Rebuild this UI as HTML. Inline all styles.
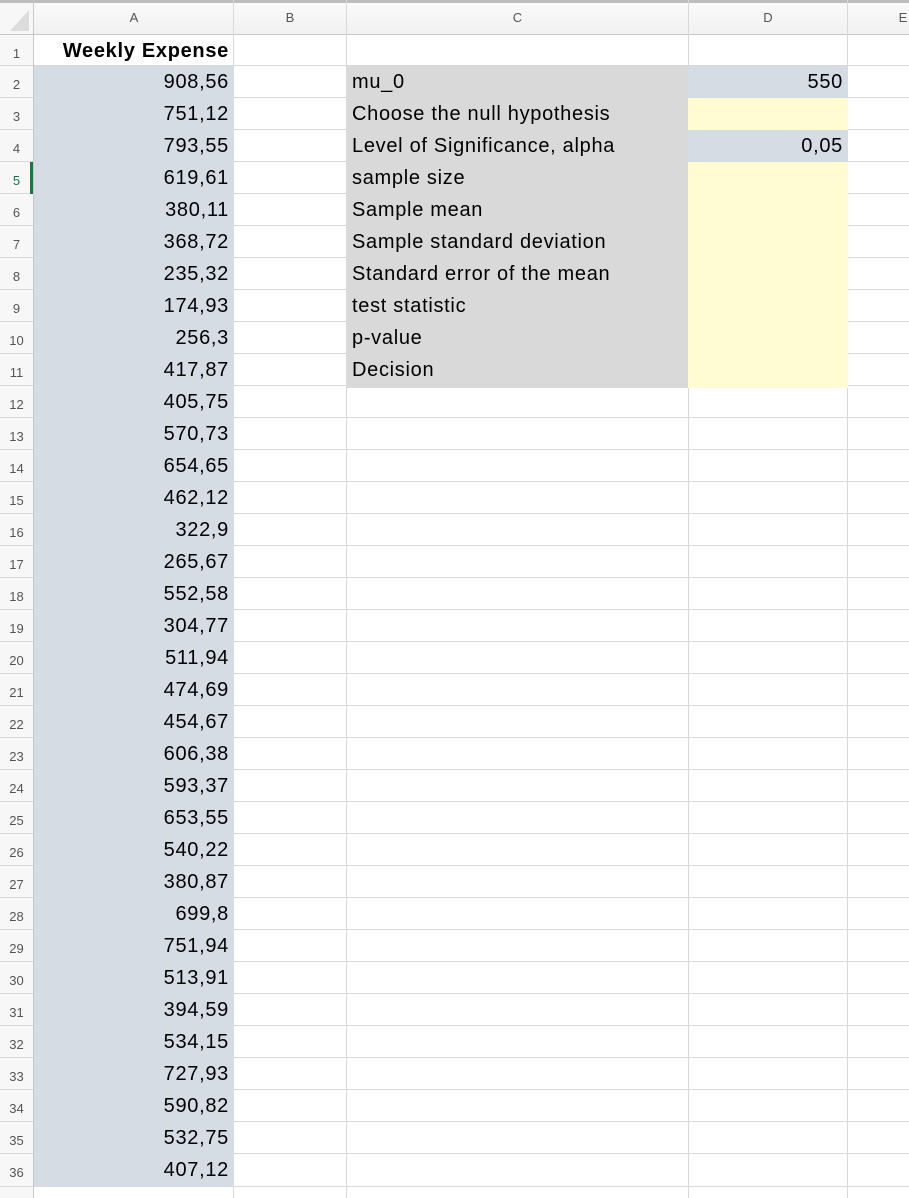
<!DOCTYPE html>
<html><head><meta charset="utf-8"><style>
*{margin:0;padding:0;box-sizing:border-box}
body{width:909px;height:1198px;position:relative;overflow:hidden;background:#fff;font-family:"Liberation Sans",Calibri,sans-serif;color:#000}
.a{position:absolute}
.h{position:absolute;left:0;width:909px;height:1px;background:#d8d8d8}
.v{position:absolute;top:0;width:1px;height:1198px;background:#d8d8d8}
.t{position:absolute;font-size:20px;line-height:31px;height:31px;white-space:nowrap;padding-top:1px;letter-spacing:0.7px}
.r{text-align:right}
.n{position:absolute;left:0;width:33px;text-align:center;font-size:13px;color:#555;line-height:31px;padding-top:3px}
.c{position:absolute;top:0;height:34px;line-height:36px;font-size:13px;color:#555;text-align:center}
</style></head><body>
<div class="a" style="left:0;top:0;width:909px;height:34px;background:linear-gradient(#fbfbfb,#f1f1f1)"></div>
<div class="a" style="left:0;top:0;width:33px;height:1198px;background:#f7f7f7"></div>
<div class="a" style="left:0;top:0;width:909px;height:3px;background:#bdbdbd"></div>
<svg class="a" style="left:8px;top:8px" width="22" height="24"><polygon points="21,2 21,23 2,23" fill="#dcdcdc"/></svg>
<div class="h" style="top:34px;background:#c8c8c8"></div>
<div class="h" style="top:65px"></div><div class="h" style="top:97px"></div><div class="h" style="top:129px"></div><div class="h" style="top:161px"></div><div class="h" style="top:193px"></div><div class="h" style="top:225px"></div><div class="h" style="top:257px"></div><div class="h" style="top:289px"></div><div class="h" style="top:321px"></div><div class="h" style="top:353px"></div><div class="h" style="top:385px"></div><div class="h" style="top:417px"></div><div class="h" style="top:449px"></div><div class="h" style="top:481px"></div><div class="h" style="top:513px"></div><div class="h" style="top:545px"></div><div class="h" style="top:577px"></div><div class="h" style="top:609px"></div><div class="h" style="top:641px"></div><div class="h" style="top:673px"></div><div class="h" style="top:705px"></div><div class="h" style="top:737px"></div><div class="h" style="top:769px"></div><div class="h" style="top:801px"></div><div class="h" style="top:833px"></div><div class="h" style="top:865px"></div><div class="h" style="top:897px"></div><div class="h" style="top:929px"></div><div class="h" style="top:961px"></div><div class="h" style="top:993px"></div><div class="h" style="top:1025px"></div><div class="h" style="top:1057px"></div><div class="h" style="top:1089px"></div><div class="h" style="top:1121px"></div><div class="h" style="top:1153px"></div><div class="h" style="top:1186px"></div>
<div class="v" style="left:33px;background:#c8c8c8"></div>
<div class="v" style="left:233px"></div>
<div class="v" style="left:346px"></div>
<div class="v" style="left:688px"></div>
<div class="v" style="left:847px"></div>
<div class="a" style="left:34px;top:66px;width:200px;height:1121px;background:#d6dce4"></div>
<div class="a" style="left:346px;top:66px;width:342px;height:322px;background:#d9d9d9"></div>
<div class="a" style="left:688px;top:66px;width:160px;height:322px;background:#fffcd4"></div>
<div class="a" style="left:688px;top:66px;width:160px;height:32px;background:#d6dce4"></div>
<div class="a" style="left:688px;top:130px;width:160px;height:32px;background:#d6dce4"></div>
<div class="a" style="left:30px;top:162px;width:3px;height:32px;background:#217346"></div>
<div class="c" style="left:34px;width:200px">A</div>
<div class="c" style="left:234px;width:112px">B</div>
<div class="c" style="left:347px;width:341px">C</div>
<div class="c" style="left:689px;width:158px">D</div>
<div class="c" style="left:897px;width:12px">E</div>
<div class="n" style="top:35px">1</div>
<div class="t r" style="left:34px;width:195px;top:35px;font-weight:bold">Weekly Expense</div>
<div class="t" style="left:352px;top:66px">mu_0</div>
<div class="t" style="left:352px;top:98px">Choose the null hypothesis</div>
<div class="t" style="left:352px;top:130px">Level of Significance, alpha</div>
<div class="t" style="left:352px;top:162px">sample size</div>
<div class="t" style="left:352px;top:194px">Sample mean</div>
<div class="t" style="left:352px;top:226px">Sample standard deviation</div>
<div class="t" style="left:352px;top:258px">Standard error of the mean</div>
<div class="t" style="left:352px;top:290px">test statistic</div>
<div class="t" style="left:352px;top:322px">p-value</div>
<div class="t" style="left:352px;top:354px">Decision</div>
<div class="t r" style="left:689px;width:154px;top:66px">550</div>
<div class="t r" style="left:689px;width:154px;top:130px">0,05</div>
<div class="n" style="top:66px">2</div><div class="t r" style="left:34px;width:195px;top:66px">908,56</div>
<div class="n" style="top:98px">3</div><div class="t r" style="left:34px;width:195px;top:98px">751,12</div>
<div class="n" style="top:130px">4</div><div class="t r" style="left:34px;width:195px;top:130px">793,55</div>
<div class="n" style="top:162px;color:#217346">5</div><div class="t r" style="left:34px;width:195px;top:162px">619,61</div>
<div class="n" style="top:194px">6</div><div class="t r" style="left:34px;width:195px;top:194px">380,11</div>
<div class="n" style="top:226px">7</div><div class="t r" style="left:34px;width:195px;top:226px">368,72</div>
<div class="n" style="top:258px">8</div><div class="t r" style="left:34px;width:195px;top:258px">235,32</div>
<div class="n" style="top:290px">9</div><div class="t r" style="left:34px;width:195px;top:290px">174,93</div>
<div class="n" style="top:322px">10</div><div class="t r" style="left:34px;width:195px;top:322px">256,3</div>
<div class="n" style="top:354px">11</div><div class="t r" style="left:34px;width:195px;top:354px">417,87</div>
<div class="n" style="top:386px">12</div><div class="t r" style="left:34px;width:195px;top:386px">405,75</div>
<div class="n" style="top:418px">13</div><div class="t r" style="left:34px;width:195px;top:418px">570,73</div>
<div class="n" style="top:450px">14</div><div class="t r" style="left:34px;width:195px;top:450px">654,65</div>
<div class="n" style="top:482px">15</div><div class="t r" style="left:34px;width:195px;top:482px">462,12</div>
<div class="n" style="top:514px">16</div><div class="t r" style="left:34px;width:195px;top:514px">322,9</div>
<div class="n" style="top:546px">17</div><div class="t r" style="left:34px;width:195px;top:546px">265,67</div>
<div class="n" style="top:578px">18</div><div class="t r" style="left:34px;width:195px;top:578px">552,58</div>
<div class="n" style="top:610px">19</div><div class="t r" style="left:34px;width:195px;top:610px">304,77</div>
<div class="n" style="top:642px">20</div><div class="t r" style="left:34px;width:195px;top:642px">511,94</div>
<div class="n" style="top:674px">21</div><div class="t r" style="left:34px;width:195px;top:674px">474,69</div>
<div class="n" style="top:706px">22</div><div class="t r" style="left:34px;width:195px;top:706px">454,67</div>
<div class="n" style="top:738px">23</div><div class="t r" style="left:34px;width:195px;top:738px">606,38</div>
<div class="n" style="top:770px">24</div><div class="t r" style="left:34px;width:195px;top:770px">593,37</div>
<div class="n" style="top:802px">25</div><div class="t r" style="left:34px;width:195px;top:802px">653,55</div>
<div class="n" style="top:834px">26</div><div class="t r" style="left:34px;width:195px;top:834px">540,22</div>
<div class="n" style="top:866px">27</div><div class="t r" style="left:34px;width:195px;top:866px">380,87</div>
<div class="n" style="top:898px">28</div><div class="t r" style="left:34px;width:195px;top:898px">699,8</div>
<div class="n" style="top:930px">29</div><div class="t r" style="left:34px;width:195px;top:930px">751,94</div>
<div class="n" style="top:962px">30</div><div class="t r" style="left:34px;width:195px;top:962px">513,91</div>
<div class="n" style="top:994px">31</div><div class="t r" style="left:34px;width:195px;top:994px">394,59</div>
<div class="n" style="top:1026px">32</div><div class="t r" style="left:34px;width:195px;top:1026px">534,15</div>
<div class="n" style="top:1058px">33</div><div class="t r" style="left:34px;width:195px;top:1058px">727,93</div>
<div class="n" style="top:1090px">34</div><div class="t r" style="left:34px;width:195px;top:1090px">590,82</div>
<div class="n" style="top:1122px">35</div><div class="t r" style="left:34px;width:195px;top:1122px">532,75</div>
<div class="n" style="top:1154px">36</div><div class="t r" style="left:34px;width:195px;top:1154px">407,12</div>
</body></html>
